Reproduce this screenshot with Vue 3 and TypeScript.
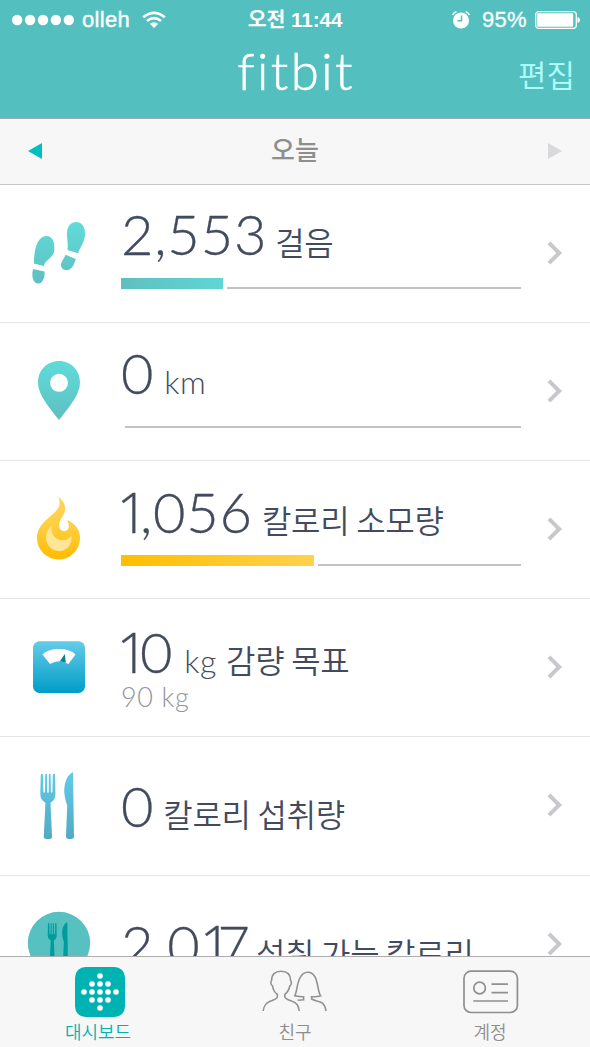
<script setup lang="ts">
type Icon = 'steps' | 'pin' | 'flame' | 'scale' | 'food' | 'plate'

interface Row {
  id: string
  icon: Icon
  value: string
  unit?: string
  label?: string
  sub?: string
  bar?: 'teal' | 'gold' | 'empty'
  fill?: number
}

const rows: Row[] = [
  { id: 'steps', icon: 'steps', value: '2,553', label: '걸음', bar: 'teal', fill: 102 },
  { id: 'distance', icon: 'pin', value: '0', unit: 'km', bar: 'empty', fill: 0 },
  { id: 'burned', icon: 'flame', value: '1,056', label: '칼로리 소모량', bar: 'gold', fill: 193 },
  { id: 'weight', icon: 'scale', value: '10', unit: 'kg', label: '감량 목표', sub: '90 kg' },
  { id: 'eaten', icon: 'food', value: '0', label: '칼로리 섭취량' },
  { id: 'left', icon: 'plate', value: '2,017', label: '섭취 가능 칼로리' },
]

const dots: [number, number][] = [
  [25, 9], [17, 17], [25, 17], [33, 17],
  [9, 25], [17, 25], [25, 25], [33, 25], [41, 25],
  [17, 33], [25, 33], [33, 33], [25, 41],
]
</script>

<template>
  <div class="screen">
    <header class="top">
      <div class="status">
        <div class="carrier">
          <svg class="signal" width="64" height="12" viewBox="0 0 64 12">
            <circle v-for="n in 5" :key="n" :cx="5.2 + (n - 1) * 12.9" cy="6" r="5.2" fill="#fff" />
          </svg>
          <span class="operator">olleh</span>
          <svg class="wifi" width="24" height="18" viewBox="0 0 24 18" fill="none" stroke="#fff" stroke-width="2.6">
            <path d="M1.2 6.2 Q12 -2.6 22.8 6.2" />
            <path d="M5 10 Q12 4.4 19 10" />
            <path d="M12 17 L7.8 12.8 Q12 9.8 16.2 12.8 Z" fill="#fff" stroke="none" />
          </svg>
        </div>
        <div class="clock">오전 11:44</div>
        <div class="power">
          <svg class="alarm" width="18" height="18" viewBox="0 0 18 18">
            <circle cx="9" cy="9.5" r="8" fill="#fff" />
            <path d="M9.5 4.5 V9.8 H5.5" fill="none" stroke="#53bfbf" stroke-width="1.5" />
            <path d="M.6 4 Q1.5 1.4 4.4 .8 M17.4 4 Q16.5 1.4 13.6 .8" fill="none" stroke="#fff" stroke-width="1.5" />
          </svg>
          <span class="percent">95%</span>
          <svg class="battery" width="46" height="18" viewBox="0 0 46 18">
            <rect x=".7" y=".7" width="40.6" height="16.6" rx="3" fill="none" stroke="#fff" stroke-width="1.3" />
            <rect x="2.2" y="2.2" width="36" height="13.6" rx="1" fill="#fff" />
            <path d="M42.5 6 Q45 6.5 45 9 Q45 11.5 42.5 12 Z" fill="#fff" />
          </svg>
        </div>
      </div>
      <div class="brand">
        <div class="logo">fitbit</div>
        <div class="edit">편집</div>
      </div>
    </header>

    <nav class="day">
      <svg width="14" height="16" viewBox="0 0 14 16"><path d="M0 8 L14 0 V16 Z" fill="#00bfc0" /></svg>
      <span class="today">오늘</span>
      <svg width="14" height="16" viewBox="0 0 14 16"><path d="M14 8 L0 0 V16 Z" fill="#d9d9db" /></svg>
    </nav>

    <main class="list">
      <section v-for="r in rows" :key="r.id" class="row" :class="r.id">
        <svg class="icon" width="118" height="137" viewBox="0 0 118 137">
          <defs>
            <linearGradient :id="'teal-' + r.id" x1="0" y1="36" x2="0" y2="98" gradientUnits="userSpaceOnUse">
              <stop offset="0" stop-color="#60dcdb" /><stop offset="1" stop-color="#5fbfc0" />
            </linearGradient>
            <linearGradient :id="'gold-' + r.id" x1="0" y1="36" x2="0" y2="98" gradientUnits="userSpaceOnUse">
              <stop offset="0" stop-color="#ffd45c" /><stop offset=".45" stop-color="#ffcf42" /><stop offset="1" stop-color="#ffbd00" />
            </linearGradient>
            <linearGradient :id="'blue-' + r.id" x1="0" y1="42" x2="0" y2="94" gradientUnits="userSpaceOnUse">
              <stop offset="0" stop-color="#66cce8" /><stop offset="1" stop-color="#009cc8" />
            </linearGradient>
            <linearGradient :id="'sky-' + r.id" x1="0" y1="36" x2="0" y2="102" gradientUnits="userSpaceOnUse">
              <stop offset="0" stop-color="#5fcbe8" /><stop offset="1" stop-color="#54a9c2" />
            </linearGradient>
          </defs>
          <g v-if="r.icon === 'steps'" :fill="`url(#teal-${r.id})`">
            <path d="M33.9 78.6 C33.8 67 36.5 51 46.5 51 C52.5 51 54.8 57 54.3 64.5 C54 73 45.5 74 43.8 81 Z" />
            <path d="M33 84 L44.5 86.4 C45.3 93 42 98.5 38.2 98.5 C33.2 98.5 31.2 92 33 84 Z" />
            <path d="M67.5 65 C68.4 58 66.8 54 67 48 C67.3 41 71 37 76 37 C81.5 37 85 41.5 85 48 C85 57 80.5 61.5 78 68.3 Z" />
            <path d="M65.6 69.7 L75.7 74 C74.6 79.5 71.4 85.2 66.6 85.2 C62 85 60 81.5 61.5 77.3 C62.4 74.6 64.6 72.8 65.6 69.7 Z" />
          </g>
          <path
            v-else-if="r.icon === 'pin'"
            :fill="`url(#teal-${r.id})`"
            fill-rule="evenodd"
            d="M59 38 C71 38 80 47.3 80 59.5 C80 72 69 84 59 97 C49 84 38 72 38 59.5 C38 47.3 47 38 59 38 Z M59 50.8 A9 9 0 1 0 59 68.8 A9 9 0 1 0 59 50.8 Z"
          />
          <g v-else-if="r.icon === 'flame'">
            <path
              :fill="`url(#gold-${r.id})`"
              d="M58 35.3 C62.5 39.5 65.5 43 65.2 48.5 C64.8 54.5 58.8 58 59.2 65 C59.4 68 61.5 70.2 64 70.2 C69.5 70 70 64.5 67.2 59 C73 61.5 80 67 80 76.5 C80 88.5 71 98.4 59 98.4 C46.5 98.4 37 89 37 76.5 C37 70.5 39.5 66 43.5 61.7 C49 55.5 58 50.5 59.4 44 C60 41 59.4 38.5 58 35.3 Z"
            />
            <path
              fill="#ffe597"
              d="M51.3 65 C50.8 73 55 79.2 62.5 79.2 C66.5 79.2 69.5 77.5 71.4 74.5 C72.6 83 67 90 59.5 90 C51.5 90 46 84 46 76.8 C46 72 48 68 51.3 65 Z"
            />
          </g>
          <g v-else-if="r.icon === 'scale'">
            <rect x="33" y="42.3" width="52" height="51.7" rx="6.5" :fill="`url(#blue-${r.id})`" />
            <path d="M42.5 55.5 Q47.5 50 59 50 Q70.5 50 75.5 55.5 L68.5 65 Q59 59.6 50 65 Z" fill="#fff" />
            <path d="M64.8 55 L65.8 63.8 Q63 62.5 59.7 62.5 Z" fill="#087f9b" />
          </g>
          <g v-else>
            <circle v-if="r.icon === 'plate'" cx="59" cy="67" r="31.2" fill="#57c1c1" />
            <g
              :transform="r.icon === 'plate' ? 'translate(23.5 25) scale(.6)' : undefined"
              :fill="r.icon === 'plate' ? '#009c9d' : `url(#sky-${r.id})`"
            >
              <path
                d="M41.8 36.7 Q42.9 36.7 42.9 38 L43.4 55.6 H45 L45.2 38 Q45.3 36.7 46.1 36.7 Q47 36.7 47 38 V55.6 H48.8 V38 Q48.8 36.7 49.7 36.7 Q50.5 36.7 50.6 38 L50.9 55.6 H52.4 L52.8 38 Q52.8 36.7 53.9 36.7 Q54.9 36.7 55 38 L55.4 56.5 Q55.6 63 50.5 65.8 L52 99.5 Q52.1 102 49.5 102 H46.4 Q43.7 102 43.8 99.5 L45.4 65.8 Q40.2 63 40.3 56.5 L40.8 38 Q40.9 36.7 41.8 36.7 Z"
              />
              <path
                d="M72 35.4 Q73 35.2 73 36.5 L74 99.3 Q74 102 71.2 102 H68.8 Q66 102 66 99.3 L67.2 68.5 Q64.2 60 64.2 53 Q64.5 40.5 72 35.4 Z"
              />
            </g>
          </g>
        </svg>

        <div class="body">
          <div class="line">
            <span class="value"><span v-for="(c, i) in r.value" :key="i" :class="{ one: c === '1', lead: i === 0 }">{{ c }}</span></span>
            <span v-if="r.unit" class="unit">{{ r.unit }}</span>
            <span v-if="r.label" class="label">{{ r.label }}</span>
          </div>
          <div v-if="r.sub" class="sub">{{ r.sub }}</div>
          <div v-if="r.bar" class="meter">
            <div class="fill" :class="r.bar" :style="{ width: r.fill + 'px' }"></div>
            <div class="track"></div>
          </div>
        </div>

        <svg class="chevron" width="16" height="24" viewBox="0 0 16 24">
          <path d="M2 1.8 L12.2 12 L2 22.2" fill="none" stroke="#c7c7cc" stroke-width="4" />
        </svg>
      </section>
    </main>

    <footer class="tabs">
      <div class="tab active">
        <svg width="50" height="50" viewBox="0 0 50 50">
          <rect width="50" height="50" rx="10.5" fill="#00b3b3" />
          <circle v-for="(d, i) in dots" :key="i" :cx="d[0]" :cy="d[1]" r="2.8" fill="#fff" />
        </svg>
        <span>대시보드</span>
      </div>
      <div class="tab">
        <svg width="66" height="50" viewBox="0 0 66 50" fill="none" stroke="#929292" stroke-width="1.6">
          <path d="M1.2 44 C2 38 4 36 8 34.3 C12 32.5 15.4 32 15.4 29.5 V27.5 C12 25 11 22 10.6 19 C8.6 18 8.4 14.5 9.6 13.5 C9.6 7.5 13 4.2 19 4.2 C25 4.2 28.6 7.5 28.6 13.5 C29.8 14.5 29.6 18 27.8 19 C27.2 22 26 25 22.8 27.5 V29.5 C22.8 32 26 32.5 30 34.3 C34.5 36 36.5 38 37.2 44" />
          <path d="M35.6 33.2 L41.6 32.7 V29.8 C38 29.6 35 29.6 32.8 28.8 C35.5 25 34.8 5.2 45.8 5.2 C56.8 5.2 54.8 24 58.6 28.8 C56 29.8 53 29.8 49.6 29.8 V32 C52 33.5 56 34 59.4 35.5 C62.4 37.3 63.5 40 64 44" />
        </svg>
        <span>친구</span>
      </div>
      <div class="tab account">
        <svg width="56" height="50" viewBox="0 0 56 50" fill="none" stroke="#8f8f8f" stroke-width="1.7">
          <rect x="1" y="4.2" width="53.4" height="41.3" rx="7" />
          <circle cx="16.6" cy="21" r="5.8" />
          <path d="M28.5 17.2 H45 M28.5 25.7 H45 M10.3 34 H45" />
        </svg>
        <span>계정</span>
      </div>
    </footer>
  </div>
</template>

<style>
body { margin: 0; background: #fff; }
</style>

<style scoped>
.screen {
  width: 590px;
  height: 1047px;
  display: flex;
  flex-direction: column;
  overflow: hidden;
  background: #fff;
  font-family: "Noto Sans CJK KR", sans-serif;
}
.screen svg { display: block; flex: none; }
.top {
  box-sizing: border-box;
  height: 119px;
  flex: none;
  background: #53bfbf;
  border-bottom: 1px solid #a5aaaa;
  color: #fff;
}
.status {
  height: 38px;
  display: grid;
  grid-template-columns: 190px 210px 190px;
  align-items: center;
}
.carrier { display: flex; align-items: center; padding-left: 12px; }
.operator {
  font: 22px/38px "Liberation Sans", sans-serif;
  margin-left: 6px;
  width: 49px;
  letter-spacing: 0.3px;
  -webkit-text-stroke: 0.4px #fff;
}
.wifi { margin-left: 11px; }
.clock {
  text-align: center;
  font: bold 20.5px/40px "Liberation Sans", "Noto Sans CJK KR", sans-serif;
}
.power { display: flex; align-items: center; padding-left: 52px; }
.percent {
  font: 22px/38px "Liberation Sans", sans-serif;
  margin-left: 12px;
  width: 45px;
  letter-spacing: 0.3px;
  -webkit-text-stroke: 0.3px #fff;
}
.battery { margin-left: 8px; }
.brand {
  height: 80px;
  display: grid;
  grid-template-columns: 210px 1fr;
  padding-left: 190px;
}
.logo {
  padding-left: 2px;
  text-align: center;
  font: 300 51px/65px Lato, sans-serif;
  font-variant-ligatures: none;
  letter-spacing: 2.4px;
  -webkit-text-stroke: 0.6px #fff;
}
.edit {
  text-align: right;
  padding-right: 15px;
  font-size: 31px;
  line-height: 72px;
  font-weight: 350;
  color: #b0ffff;
}
.day {
  box-sizing: border-box;
  height: 66px;
  flex: none;
  display: flex;
  align-items: center;
  justify-content: space-between;
  padding: 0 28px 2px;
  background: #f7f7f7;
  border-bottom: 1px solid #c8c8ca;
}
.today { font-size: 26px; line-height: 60px; margin-top: -3px; font-weight: 500; color: #8e8e8e; }
.list { flex: 1; min-height: 0; overflow: hidden; }
.row {
  box-sizing: border-box;
  height: 138px;
  display: flex;
  border-bottom: 1px solid #e5e5e6;
}
.row.eaten { height: 139px; }
.icon { margin-right: 3px; }
.body { width: 400px; flex: none; padding-top: 12px; }
.steps .body { padding-top: 11px; }
.weight .body { padding-top: 14px; }
.eaten .body { padding-top: 31px; }
.left .body { padding-top: 30px; }
.line {
  height: 76px;
  display: flex;
  align-items: baseline;
  white-space: nowrap;
  color: #424b5d;
  line-height: 76px;
}
.value {
  font: 300 56px/76px Lato, sans-serif;
  letter-spacing: 0.8px;
  margin-right: 9px;
  -webkit-text-stroke: 0.3px #424b5d;
}
.one { font-family: "Open Sans", sans-serif; letter-spacing: -14px; margin-left: -1px; }
.one.lead { letter-spacing: -8.5px; margin-left: -4.5px; }
.unit { font: 300 32px/76px Lato, sans-serif; letter-spacing: 0.6px; margin-left: 1px; margin-right: 9px; }
.weight .unit { margin-left: 2px; }
.label { font-size: 32px; font-weight: 350; line-height: 76px; letter-spacing: -0.3px; }
.steps .label { margin-left: -1px; }
.left .label { margin-left: -4px; }
.sub {
  margin-top: -9px;
  font: 300 27px/34px Lato, sans-serif;
  letter-spacing: 0.6px;
  color: #93969d;
}
.meter { display: flex; align-items: flex-end; height: 11px; margin-top: 6px; }
.fill { height: 11px; margin-right: 4px; flex: none; }
.teal { background: linear-gradient(90deg, #5fbfc0, #60d5d4); }
.gold { background: linear-gradient(90deg, #ffbe00, #ffd24d); }
.track { flex: 1; height: 2px; background: #c2c2c7; }
.chevron { margin: 56px 0 0 26px; }
.tabs {
  box-sizing: border-box;
  height: 91px;
  flex: none;
  display: grid;
  grid-template-columns: 199px 192px 198px;
  background: #f7f7f7;
  border-top: 1px solid #adadad;
}
.tab {
  display: flex;
  flex-direction: column;
  align-items: center;
  padding-top: 10px;
  color: #8e8e8e;
  font-size: 18px;
  line-height: 28px;
  font-weight: 350;
}
.account svg { margin-left: 2px; }
.active { color: #00b3b3; }
.active span { margin-right: 3px; }
</style>
